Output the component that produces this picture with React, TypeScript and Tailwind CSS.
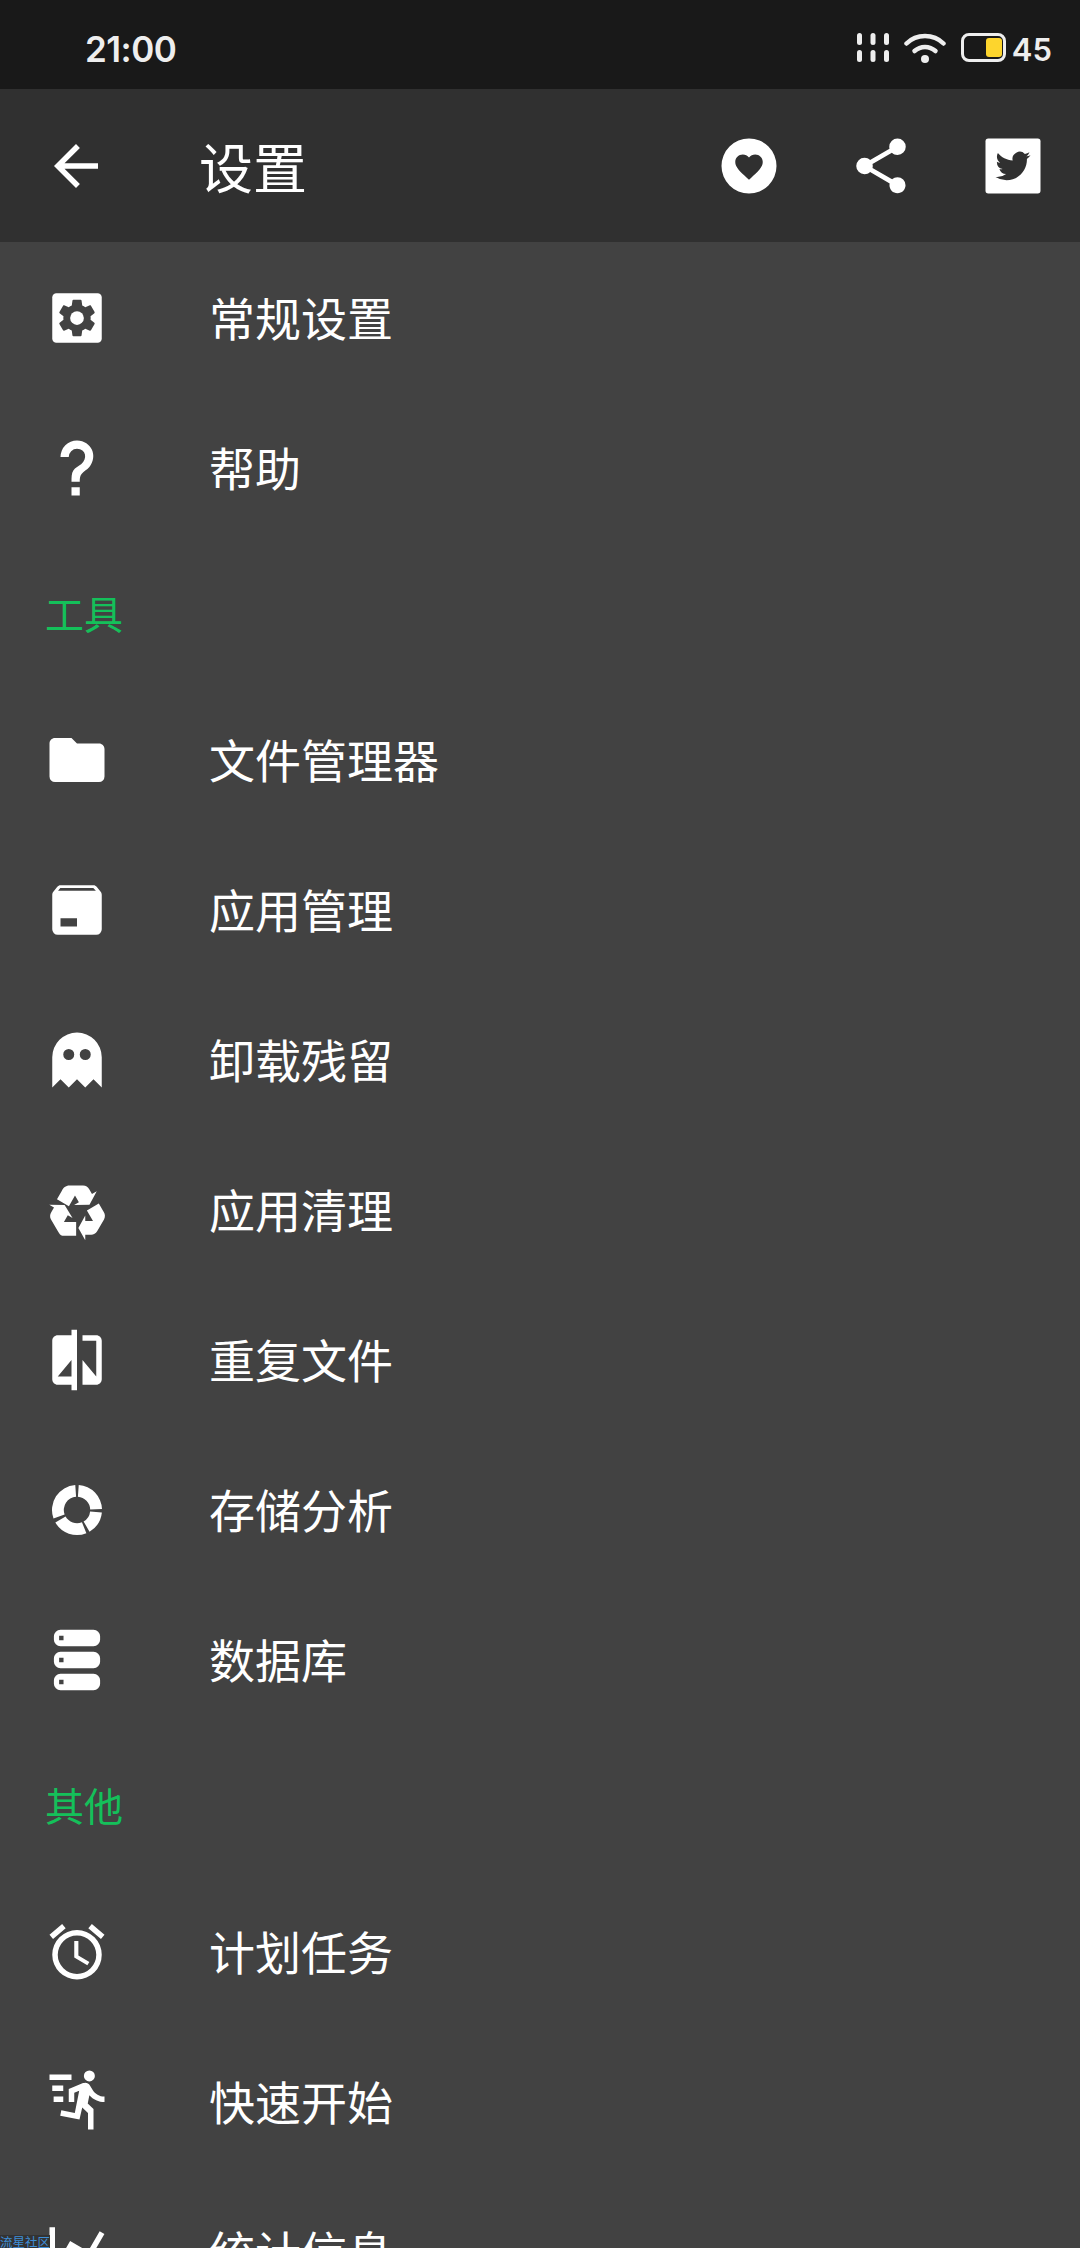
import type { ReactNode } from "react";

const CJK = "font-['Noto_Sans_CJK_SC','Noto_Sans',sans-serif]";

// material / mdi paths, all on a 24 unit grid
const paths = {
  back: "M20 11H7.83l5.59-5.59L12 4l-8 8 8 8 1.41-1.41L7.83 13H20v-2z",
  heart:
    "M12,2A10,10 0 0,0 2,12A10,10 0 0,0 12,22A10,10 0 0,0 22,12A10,10 0 0,0 12,2M12,17L11.28,16.34C8.7,14 7,12.46 7,10.57C7,9.03 8.21,7.83 9.75,7.83C10.62,7.83 11.46,8.23 12,8.87C12.54,8.23 13.38,7.83 14.25,7.83C15.79,7.83 17,9.03 17,10.57C17,12.46 15.3,14 12.72,16.34L12,17Z",
  share:
    "M18,16.08C17.24,16.08 16.56,16.38 16.04,16.85L8.91,12.7C8.96,12.47 9,12.24 9,12C9,11.76 8.96,11.53 8.91,11.3L15.96,7.19C16.5,7.69 17.21,8 18,8A3,3 0 0,0 21,5A3,3 0 0,0 18,2A3,3 0 0,0 15,5C15,5.24 15.04,5.47 15.09,5.7L8.04,9.81C7.5,9.31 6.79,9 6,9A3,3 0 0,0 3,12A3,3 0 0,0 6,15C6.79,15 7.5,14.69 8.04,14.19L15.16,18.34C15.11,18.55 15.08,18.77 15.08,19C15.08,20.61 16.39,21.91 18,21.91C19.61,21.91 20.92,20.61 20.92,19A2.92,2.92 0 0,0 18,16.08Z",
  bird: "M23.953 4.57a10 10 0 01-2.825.775 4.958 4.958 0 002.163-2.723c-.951.555-2.005.959-3.127 1.184a4.92 4.92 0 00-8.384 4.482C7.69 8.095 4.067 6.13 1.64 3.162a4.822 4.822 0 00-.666 2.475c0 1.71.87 3.213 2.188 4.096a4.904 4.904 0 01-2.228-.616v.06a4.923 4.923 0 003.946 4.827 4.996 4.996 0 01-2.212.085 4.936 4.936 0 004.604 3.417 9.867 9.867 0 01-6.102 2.105c-.39 0-.779-.023-1.17-.067a13.995 13.995 0 007.557 2.209c9.053 0 13.998-7.496 13.998-13.985 0-.21 0-.42-.015-.63A9.935 9.935 0 0024 4.59z",
  cog: "M19.14 12.94c.04-.3.06-.61.06-.94 0-.32-.02-.64-.07-.94l2.03-1.58c.18-.14.23-.41.12-.61l-1.92-3.32c-.12-.22-.37-.29-.59-.22l-2.39.96c-.5-.38-1.03-.7-1.62-.94l-.36-2.54c-.04-.24-.24-.41-.48-.41h-3.84c-.24 0-.43.17-.47.41l-.36 2.54c-.59.24-1.13.57-1.62.94l-2.39-.96c-.22-.08-.47 0-.59.22L2.74 8.87c-.12.21-.08.47.12.61l2.03 1.58c-.05.3-.09.63-.09.94s.02.64.07.94l-2.03 1.58c-.18.14-.23.41-.12.61l1.92 3.32c.12.22.37.29.59.22l2.39-.96c.5.38 1.03.7 1.62.94l.36 2.54c.05.24.24.41.48.41h3.84c.24 0 .44-.17.47-.41l.36-2.54c.59-.24 1.13-.56 1.62-.94l2.39.96c.22.08.47 0 .59-.22l1.92-3.32c.12-.22.07-.47-.12-.61l-2.01-1.58z",
  help: "M10,19H13V22H10V19M12,2C17.35,2.22 19.68,7.62 16.5,11.67C15.67,12.67 14.33,13.33 13.67,14.17C13,15 13,16 13,17H10C10,15.33 10,13.92 10.67,12.92C11.33,11.92 12.67,11.33 13.5,10.67C15.92,8.43 15.32,5.26 12,5A3,3 0 0,0 9,8H6A6,6 0 0,1 12,2Z",
  folder: "M10,4H4C2.89,4 2,4.89 2,6V18A2,2 0 0,0 4,20H20A2,2 0 0,0 22,18V8C22,6.89 21.1,6 20,6H12L10,4Z",
  box: "M5.12,5H18.87L17.93,4H5.93L5.12,5M20.54,5.23C20.83,5.57 21,6 21,6.5V19A2,2 0 0,1 19,21H5A2,2 0 0,1 3,19V6.5C3,6 3.17,5.57 3.46,5.23L4.84,3.55C5.12,3.21 5.53,3 6,3H18C18.47,3 18.88,3.21 19.15,3.55L20.54,5.23M6,18H12V15H6V18Z",
  ghost:
    "M12,2A9,9 0 0,0 3,11V22L6,19L9,22L12,19L15,22L18,19L21,22V11A9,9 0 0,0 12,2M9,8A2,2 0 0,1 11,10A2,2 0 0,1 9,12A2,2 0 0,1 7,10A2,2 0 0,1 9,8M15,8A2,2 0 0,1 17,10A2,2 0 0,1 15,12A2,2 0 0,1 13,10A2,2 0 0,1 15,8Z",
  recycle:
    "M21.82,15.42L19.32,19.75C18.83,20.61 17.92,21.06 17,21H15V23L12.5,18.5L15,14V16H17.82L15.6,12.15L19.93,9.65L21.73,12.77C22.25,13.54 22.32,14.57 21.82,15.42M9.21,3.06H14.21C15.19,3.06 16.04,3.63 16.45,4.45L17.45,6.19L19.18,5.19L16.54,10.11L10.95,10.2L12.68,9.2L11.27,6.75L9.05,10.6L4.72,8.1L6.5,5C6.91,3.92 7.97,3.06 9.21,3.06M5.05,19.76L2.55,15.43C2.06,14.58 2.13,13.56 2.64,12.79L3.64,11.06L1.91,10.06L7.5,10.14L10.38,14.93L8.65,13.93L7.24,16.38H11.69V21.38H6.69C5.97,21.38 5.5,20.5 5.05,19.76Z",
  compare:
    "M10 3H5c-1.1 0-2 .9-2 2v14c0 1.1.9 2 2 2h5v2h2V1h-2v2zm0 15H5l5-6v6zm9-15h-5v2h5v13l-5-6v9h5c1.1 0 2-.9 2-2V5c0-1.1-.9-2-2-2z",
  server:
    "M6,1H18A2.4,2.4 0 0,1 20.4,3.4V4.6A2.4,2.4 0 0,1 18,7H6A2.4,2.4 0 0,1 3.6,4.6V3.4A2.4,2.4 0 0,1 6,1M5.5,3.2V4.8H7.1V3.2H5.5M6,9H18A2.4,2.4 0 0,1 20.4,11.4V12.6A2.4,2.4 0 0,1 18,15H6A2.4,2.4 0 0,1 3.6,12.6V11.4A2.4,2.4 0 0,1 6,9M5.5,11.2V12.8H7.1V11.2H5.5M6,17H18A2.4,2.4 0 0,1 20.4,19.4V20.6A2.4,2.4 0 0,1 18,23H6A2.4,2.4 0 0,1 3.6,20.6V19.4A2.4,2.4 0 0,1 6,17M5.5,19.2V20.8H7.1V19.2H5.5Z",
  alarm:
    "M12,20A7,7 0 0,1 5,13A7,7 0 0,1 12,6A7,7 0 0,1 19,13A7,7 0 0,1 12,20M12,4A9,9 0 0,0 3,13A9,9 0 0,0 12,22A9,9 0 0,0 21,13A9,9 0 0,0 12,4M12.5,8H11V14L15.75,16.85L16.5,15.62L12.5,13.25V8M7.88,3.39L6.6,1.86L2,5.71L3.29,7.24L7.88,3.39M22,5.72L17.4,1.86L16.11,3.39L20.71,7.24L22,5.72Z",
  run: "M16.5,4.5A2,2 0 0,0 18.5,2.5A2,2 0 0,0 16.5,.5A2,2 0 0,0 14.5,2.5A2,2 0 0,0 16.5,4.5M12.9,18.4L13.9,14L16,16V22H18V14.5L15.9,12.5L16.5,9.5C17.89,11.09 19.89,12 22,12V10C20.24,10.03 18.6,9.09 17.7,7.6L16.7,6C16.34,5.4 15.7,5 15,5C14.7,5 14.5,5.1 14.2,5.1L9,7.3V12H11V8.6L12.8,7.9L11.2,16L6.3,15L5.9,17L12.9,18.4M3,8V6H7V8H3M2,4V2H10V4H2M3.5,12V10H7V12H3.5Z",
  chart: "M16,11.78L20.24,4.45L21.97,5.45L16.74,14.5L10.23,10.75L5.46,19H22V21H2V3H4V17.54L9.5,8L16,11.78Z",
};

function Icon({ children, className = "" }: { children: ReactNode; className?: string }) {
  return (
    <svg viewBox="0 0 24 24" className={`h-[66px] w-[66px] shrink-0 fill-white ${className}`}>
      {children}
    </svg>
  );
}

const P = ({ d }: { d: string }) => <path d={d} fillRule="evenodd" />;

function arc(from: number, to: number) {
  // ring segment between two clock angles (degrees from 12 o'clock)
  const pt = (r: number, a: number) => {
    const t = (a * Math.PI) / 180;
    return `${(12 + r * Math.sin(t)).toFixed(2)},${(12 - r * Math.cos(t)).toFixed(2)}`;
  };
  const big = to - from > 180 ? 1 : 0;
  return `M${pt(9.1, from)}A9.1,9.1 0 ${big} 1 ${pt(9.1, to)}L${pt(4.8, to)}A4.8,4.8 0 ${big} 0 ${pt(4.8, from)}Z`;
}

const cogIcon = (
  <Icon>
    <rect x="3" y="3" width="18" height="18" rx="1.5" />
    <g transform="translate(12 12) scale(0.69) translate(-12 -12)">
      <path d={paths.cog} fill="#424242" />
    </g>
    <circle cx="12" cy="12" r="2.5" />
  </Icon>
);

const donutIcon = (
  <Icon>
    <path d={arc(4, 88)} />
    <path d={arc(96, 150)} />
    <path d={arc(158, 240)} />
    <path d={arc(250, 356)} />
  </Icon>
);

const twitterIcon = (
  <Icon>
    <rect x="2" y="2" width="20" height="20" rx="1" />
    <g transform="translate(12 12) scale(0.53) translate(-12 -12)">
      <path d={paths.bird} fill="#303030" />
    </g>
  </Icon>
);

const plain = (d: string) => (
  <Icon>
    <P d={d} />
  </Icon>
);

type Entry = { label: string; icon?: ReactNode };

const entries: Entry[] = [
  { label: "常规设置", icon: cogIcon },
  { label: "帮助", icon: plain(paths.help) },
  { label: "工具" },
  { label: "文件管理器", icon: plain(paths.folder) },
  { label: "应用管理", icon: plain(paths.box) },
  { label: "卸载残留", icon: plain(paths.ghost) },
  { label: "应用清理", icon: plain(paths.recycle) },
  { label: "重复文件", icon: plain(paths.compare) },
  { label: "存储分析", icon: donutIcon },
  { label: "数据库", icon: plain(paths.server) },
  { label: "其他" },
  { label: "计划任务", icon: plain(paths.alarm) },
  { label: "快速开始", icon: plain(paths.run) },
  { label: "统计信息", icon: plain(paths.chart) },
];

function StatusBar() {
  return (
    <div className="flex h-[89px] items-center justify-between bg-[#191919] pl-[85px] pr-[28px] pt-[6px] text-[#eeeeee]">
      <span className="mt-[4px] font-['Inter',sans-serif] text-[35px] font-semibold leading-none tracking-[-0.5px]">21:00</span>
      <div className="flex items-center">
        <svg viewBox="0 0 32 30" className="h-[30px] w-[32px] fill-[#eeeeee]">
          <rect x="0" y="0" width="5" height="12" rx="2.5" />
          <rect x="13.5" y="0" width="5" height="12" rx="2.5" />
          <rect x="27" y="0" width="5" height="12" rx="2.5" />
          <rect x="0" y="17" width="5" height="12" rx="2.5" />
          <rect x="13.5" y="17" width="5" height="12" rx="2.5" />
          <rect x="27" y="17" width="5" height="12" rx="2.5" />
        </svg>
        <svg viewBox="0 0 42 32" className="ml-[15px] h-[32px] w-[42px] fill-none stroke-[#eeeeee] stroke-[4.5px]">
          <path d="M2.5 11.5C12.5 1.5 29.5 1.5 39.5 11.5" strokeLinecap="round" />
          <path d="M10.5 19C16.5 13.5 25.5 13.5 31.5 19" strokeLinecap="round" />
          <circle cx="21" cy="27" r="4" className="fill-[#eeeeee] stroke-0" />
        </svg>
        <div className="ml-[15px] flex h-[29px] w-[45px] items-center justify-end rounded-[8px] border-[3.5px] border-[#eeeeee] pr-[1px]">
          <div className="h-[19px] w-[16px] rounded-[3px] bg-[#fdd52d]" />
        </div>
        <span className="ml-[6px] mt-[3px] font-['Inter',sans-serif] text-[31px] font-semibold leading-none">45</span>
      </div>
    </div>
  );
}

function AppBar() {
  return (
    <div className="flex h-[153px] items-center bg-[#303030] pl-[43px] pr-[1px] text-white">
      <Icon>
        <path d={paths.back} />
      </Icon>
      <h1 className={`ml-[90px] flex-1 text-[54px] font-normal leading-none ${CJK}`}>设置</h1>
      <div className="flex">
        <div className="flex w-[132px] justify-center">{plain(paths.heart)}</div>
        <div className="flex w-[132px] justify-center">{plain(paths.share)}</div>
        <div className="flex w-[132px] justify-center">{twitterIcon}</div>
      </div>
    </div>
  );
}

export default function App() {
  return (
    <div className="relative h-[2248px] w-[1080px] overflow-hidden bg-[#424242]">
      <StatusBar />
      <AppBar />
      <div className="pt-px">
        {entries.map((item) =>
          item.icon ? (
            <div key={item.label} className="flex h-[150px] items-center pl-[44px]">
              {item.icon}
              <span className={`mb-[4px] ml-[99px] text-[46px] leading-none text-white ${CJK}`}>{item.label}</span>
            </div>
          ) : (
            <div key={item.label} className="flex h-[142px] items-center pl-[45px]">
              <span className={`mb-[3px] text-[39px] leading-none text-[#14c05a] ${CJK}`}>{item.label}</span>
            </div>
          )
        )}
      </div>
      <span className={`absolute bottom-0 left-0 w-[50px] bg-[#333] text-[12.5px] leading-[13px] whitespace-nowrap text-[#3f8fd8] ${CJK}`}>
        流星社区
      </span>
    </div>
  );
}
